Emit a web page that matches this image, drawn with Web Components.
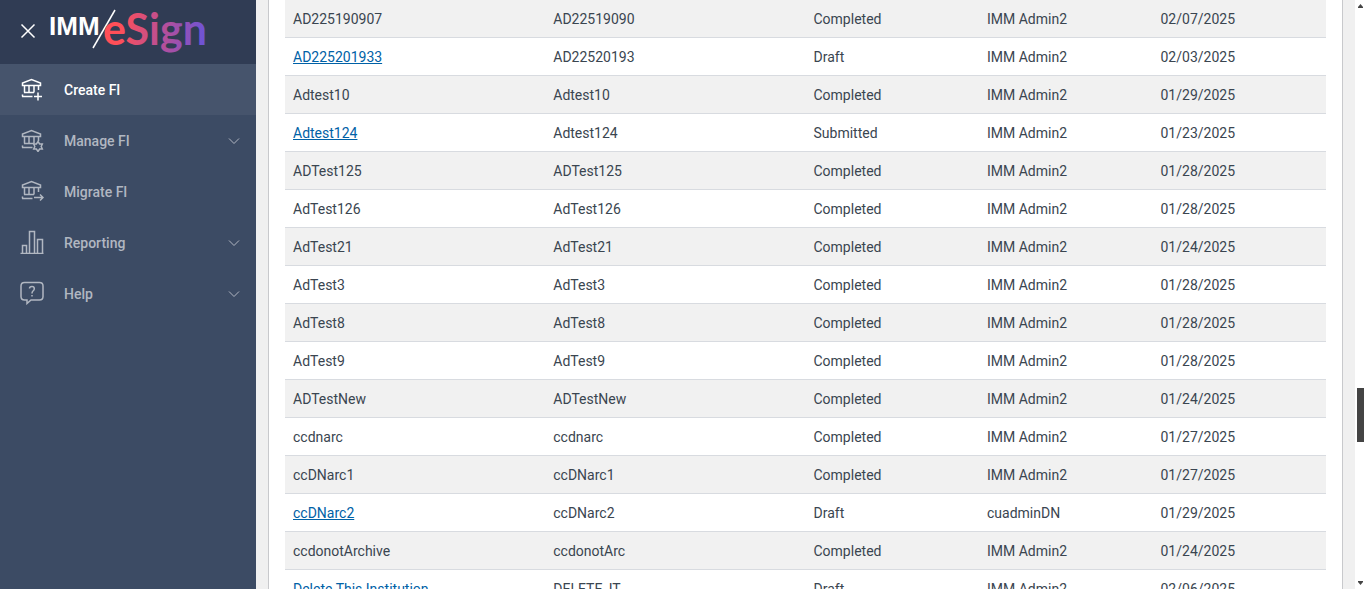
<!DOCTYPE html>
<html lang="en">
<head>
<meta charset="utf-8">
<meta name="viewport" content="width=device-width, initial-scale=1">
<title>IMM eSign Admin</title>
<style>
body {
  margin: 0;
  font-family: Roboto, "Liberation Sans", sans-serif;
  font-size: 14px;
  line-height: 21px;
  color: #3c4b64;
  background: #f0f0f0;
}
</style>
</head>
<body>
<app-shell>
  <side-nav slot="nav">
    <nav-item icon="create" active>Create FI</nav-item>
    <nav-item icon="manage" expandable>Manage FI</nav-item>
    <nav-item icon="migrate">Migrate FI</nav-item>
    <nav-item icon="reporting" expandable>Reporting</nav-item>
    <nav-item icon="help" expandable>Help</nav-item>
  </side-nav>
  <fi-table></fi-table>
  <scroll-rail slot="rail"></scroll-rail>
</app-shell>

<script>
const shellTemplate = document.createElement("template");
shellTemplate.innerHTML = `
<style>
:host {
  display: grid;
  grid-template-columns: 256px minmax(0, 1fr) 11px;
  height: 100vh;
  overflow: hidden;
}
main {
  padding: 0 12px;
  overflow: hidden;
}
section {
  min-height: 100%;
  box-sizing: border-box;
  padding: 0 16px;
  background: #fff;
  border: 1px solid #c8c9cc;
  border-width: 0 1px;
}
</style>
<slot name="nav"></slot>
<main><section><slot></slot></section></main>
<slot name="rail"></slot>
`;

class AppShell extends HTMLElement {
  constructor() {
    super();
    this.attachShadow({ mode: "open" });
    this.shadowRoot.appendChild(shellTemplate.content.cloneNode(true));
  }
}

const logoTemplate = document.createElement("template");
logoTemplate.innerHTML = `
<style>
:host {
  display: block;
}
svg {
  display: block;
}
text {
  font-family: Lato, sans-serif;
  font-weight: 700;
}
.imm {
  font-family: "Liberation Sans", sans-serif;
}
</style>
<svg width="160" height="52" viewBox="0 0 160 52" role="img" aria-label="IMM eSign">
  <defs>
    <linearGradient id="brand" gradientUnits="userSpaceOnUse" x1="55" y1="20" x2="156" y2="32">
      <stop offset="0.15" stop-color="#ff4f58"/>
      <stop offset="0.6" stop-color="#b34f9c"/>
      <stop offset="1" stop-color="#6a54d8"/>
    </linearGradient>
  </defs>
  <text class="imm" x="-1" y="30" font-size="26" fill="#fff">IMM</text>
  <path d="M43 43L65 5" stroke="#303c54" stroke-width="4"/>
  <path d="M43 43L65 5" stroke="#fff" stroke-width="1.5"/>
  <text x="53" y="40" font-size="43" fill="url(#brand)">eSign</text>
</svg>
`;

class BrandLogo extends HTMLElement {
  constructor() {
    super();
    this.attachShadow({ mode: "open" });
    this.shadowRoot.appendChild(logoTemplate.content.cloneNode(true));
  }
}

const sideNavTemplate = document.createElement("template");
sideNavTemplate.innerHTML = `
<style>
:host {
  display: flex;
  flex-direction: column;
  background: #3c4b64;
}
header {
  display: flex;
  align-items: center;
  gap: 14px;
  box-sizing: border-box;
  height: 64px;
  padding: 0 0 2px 20px;
  background: #303c54;
}
button {
  display: block;
  padding: 0;
  border: 0;
  background: none;
  color: #fff;
}
button svg {
  display: block;
}
nav {
  display: flex;
  flex-direction: column;
}
</style>
<header>
  <button type="button" aria-label="Close menu">
    <svg width="16" height="16" viewBox="0 0 16 16" fill="none" stroke="currentColor" stroke-width="1.5">
      <path d="M1.5 1.5L14.5 14.5M14.5 1.5L1.5 14.5"/>
    </svg>
  </button>
  <brand-logo></brand-logo>
</header>
<nav><slot></slot></nav>
`;

class SideNav extends HTMLElement {
  constructor() {
    super();
    this.attachShadow({ mode: "open" });
    this.shadowRoot.appendChild(sideNavTemplate.content.cloneNode(true));
  }
}

// shared by the three institution icons
const bank = `
<path d="M2.5 8.5V6L11.5 2.5L20.5 6V8.5Z"/>
<path d="M4.5 9V15.5M9 9V15.5M14 9V15.5M18.5 9V13M4 15.5H14M2.5 19.5V17.5M2 19.5H12.5"/>
`;

const icons = {
  create: bank + `<path d="M18 15.5V23.5M14 19.5H22"/>`,
  manage: bank + `<path d="M18 13.5L19.6 15.9L22.3 16L21.2 18.5L22.3 21L19.6 21.1L18 23.5L16.4 21.1L13.7 21L14.8 18.5L13.7 16L16.4 15.9Z"/>`,
  migrate: bank + `<path d="M14 18.5H23M20 15.5L23 18.5L20 21.5"/>`,
  reporting: `<path d="M0.5 23.5H23.5M2.5 23V15.5H6.5V23M9.5 23V1.5H14.5V23M17.5 23V9.5H22.5V23"/>`,
  help: `<path d="M4.5 1.5H19.5Q23 1.5 23 5V15.5Q23 19 19.5 19H11L7 22.5V19H4.5Q1 19 1 15.5V5Q1 1.5 4.5 1.5Z"/>
<path d="M9.5 7.5Q9.5 5.5 12 5.5Q14.3 5.5 14.3 7.7Q14.3 9 13 10Q12 10.8 12 12.5M12 14V15.5"/>`,
};

const navItemTemplate = document.createElement("template");
navItemTemplate.innerHTML = `
<style>
:host {
  display: block;
  color: #b1b7c1;
}
:host([active]) {
  color: #fff;
  background: #46546c;
}
.row {
  display: flex;
  align-items: center;
  gap: 20px;
  box-sizing: border-box;
  width: 100%;
  padding: 13px 16px 14px 20px;
  border: 0;
  background: none;
  color: inherit;
  font: inherit;
  font-weight: 500;
  line-height: 22px;
  text-align: left;
  text-decoration: none;
}
svg {
  display: block;
  flex: none;
  fill: none;
  stroke: currentColor;
}
.label {
  flex: 1;
  padding-top: 2px;
}
</style>
`;

class NavItem extends HTMLElement {
  constructor() {
    super();
    this.attachShadow({ mode: "open" });
    this.shadowRoot.appendChild(navItemTemplate.content.cloneNode(true));
  }

  connectedCallback() {
    const expandable = this.hasAttribute("expandable");
    const row = document.createElement(expandable ? "button" : "a");
    row.className = "row";
    if (expandable) {
      row.type = "button";
      row.setAttribute("aria-expanded", "false");
    } else {
      row.href = "#" + this.getAttribute("icon");
    }
    row.innerHTML = `
<svg width="24" height="24" viewBox="0 0 24 24" stroke-width="1.5" aria-hidden="true">${icons[this.getAttribute("icon")]}</svg>
<span class="label"><slot></slot></span>
${expandable ? `<svg width="12" height="8" viewBox="0 0 12 8" aria-hidden="true"><path d="M1 2.5L6 7.5L11 2.5"/></svg>` : ""}
`;
    this.shadowRoot.appendChild(row);
  }
}

const institutions = [
  ["AD225190907", "AD22519090", "Completed", "IMM Admin2", "02/07/2025"],
  ["AD225201933", "AD22520193", "Draft", "IMM Admin2", "02/03/2025"],
  ["Adtest10", "Adtest10", "Completed", "IMM Admin2", "01/29/2025"],
  ["Adtest124", "Adtest124", "Submitted", "IMM Admin2", "01/23/2025"],
  ["ADTest125", "ADTest125", "Completed", "IMM Admin2", "01/28/2025"],
  ["AdTest126", "AdTest126", "Completed", "IMM Admin2", "01/28/2025"],
  ["AdTest21", "AdTest21", "Completed", "IMM Admin2", "01/24/2025"],
  ["AdTest3", "AdTest3", "Completed", "IMM Admin2", "01/28/2025"],
  ["AdTest8", "AdTest8", "Completed", "IMM Admin2", "01/28/2025"],
  ["AdTest9", "AdTest9", "Completed", "IMM Admin2", "01/28/2025"],
  ["ADTestNew", "ADTestNew", "Completed", "IMM Admin2", "01/24/2025"],
  ["ccdnarc", "ccdnarc", "Completed", "IMM Admin2", "01/27/2025"],
  ["ccDNarc1", "ccDNarc1", "Completed", "IMM Admin2", "01/27/2025"],
  ["ccDNarc2", "ccDNarc2", "Draft", "cuadminDN", "01/29/2025"],
  ["ccdonotArchive", "ccdonotArc", "Completed", "IMM Admin2", "01/24/2025"],
  ["Delete This Institution", "DELETE_IT", "Draft", "IMM Admin2", "02/06/2025"],
];

const tableTemplate = document.createElement("template");
tableTemplate.innerHTML = `
<style>
:host {
  display: block;
}
table {
  width: 100%;
  table-layout: fixed;
  border-spacing: 0;
}
.wide {
  width: 25%;
}
td {
  padding: 9px 8px 7px;
  border-bottom: 1px solid #d8dbe0;
  color: #3a4550;
}
tr:nth-child(odd) td {
  background: #f1f1f1;
}
a {
  color: #0061a6;
}
</style>
<table aria-label="Financial institutions">
  <colgroup><col class="wide"><col class="wide"><col><col><col></colgroup>
  <tbody></tbody>
</table>
`;

class FiTable extends HTMLElement {
  constructor() {
    super();
    this.attachShadow({ mode: "open" });
    this.shadowRoot.appendChild(tableTemplate.content.cloneNode(true));
    const body = this.shadowRoot.querySelector("tbody");
    institutions.forEach((fields) => {
      const row = body.insertRow();
      fields.forEach((text) => {
        row.insertCell().textContent = text;
      });
      // anything not completed yet can still be opened
      if (fields[2] !== "Completed") {
        row.cells[0].innerHTML = `<a href="#edit">${fields[0]}</a>`;
      }
    });
  }
}

const railTemplate = document.createElement("template");
railTemplate.innerHTML = `
<style>
:host {
  display: flex;
  flex-direction: column;
  align-items: center;
  box-sizing: border-box;
  padding: 4px 0;
  background: #fff;
}
svg {
  display: block;
  flex: none;
  fill: #444;
}
.before {
  flex: 379;
}
.thumb {
  flex: 54;
  width: 7px;
  background: #444;
}
.after {
  flex: 139;
}
</style>
<svg width="5" height="4" viewBox="0 0 5 4"><path d="M0 4V3L2.5 0L5 3V4Z"/></svg>
<div class="before"></div>
<div class="thumb"></div>
<div class="after"></div>
<svg width="5" height="4" viewBox="0 0 5 4"><path d="M0 0V1L2.5 4L5 1V0Z"/></svg>
`;

class ScrollRail extends HTMLElement {
  constructor() {
    super();
    this.attachShadow({ mode: "open" });
    this.shadowRoot.appendChild(railTemplate.content.cloneNode(true));
    this.setAttribute("aria-hidden", "true");
  }
}

window.customElements.define("app-shell", AppShell);
window.customElements.define("brand-logo", BrandLogo);
window.customElements.define("side-nav", SideNav);
window.customElements.define("nav-item", NavItem);
window.customElements.define("fi-table", FiTable);
window.customElements.define("scroll-rail", ScrollRail);
</script>
</body>
</html>
